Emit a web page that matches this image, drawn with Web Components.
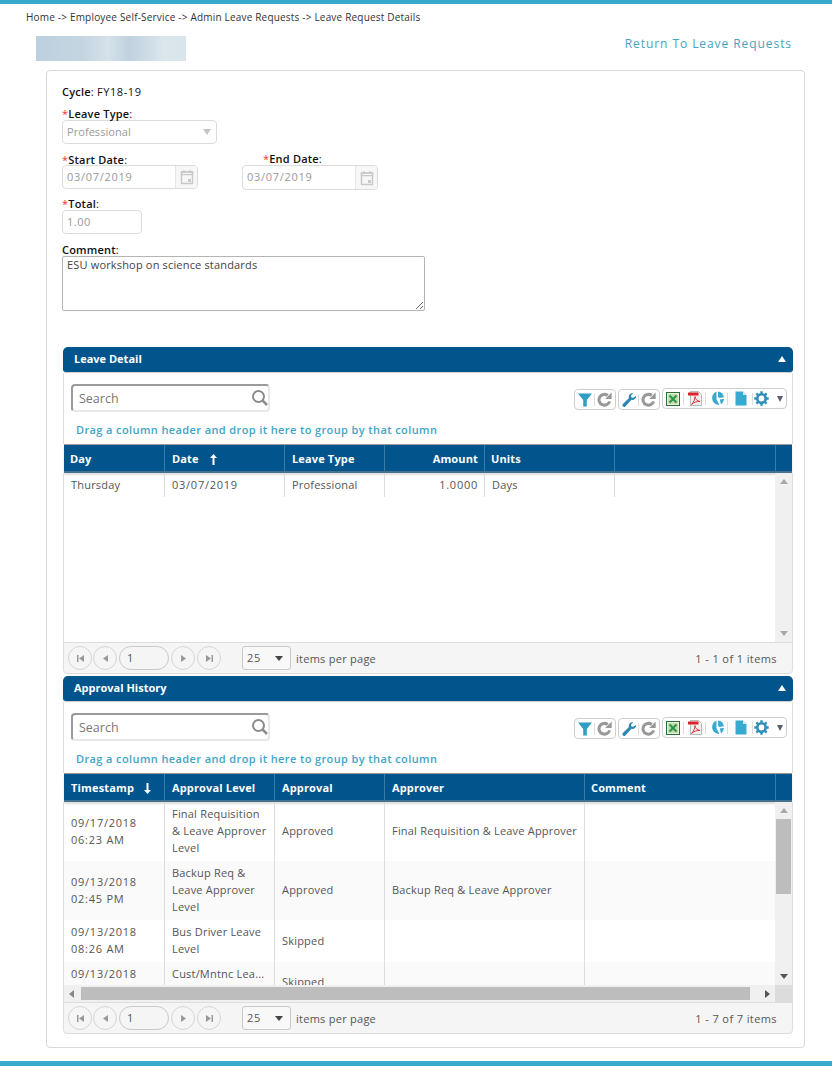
<!DOCTYPE html>
<html>
<head>
<meta charset="utf-8">
<title>Leave Request Details</title>
<style>
  html, body { margin: 0; padding: 0; background: #fff; }
  body { font-family: "Open Sans", "Liberation Sans", sans-serif; }
</style>
</head>
<body>
<leave-page>
  <span slot="crumbs">Home -&gt; Employee Self-Service -&gt; Admin Leave Requests -&gt; Leave Request Details</span>
  <span slot="back">Return To Leave Requests</span>
  <leave-form></leave-form>
  <grid-panel>
    <span slot="title">Leave Detail</span>
    <data-grid id="detailGrid" body-height="169"></data-grid>
    <grid-pager range="1 - 1 of 1 items" height="32"></grid-pager>
  </grid-panel>
  <grid-panel class="second">
    <span slot="title">Approval History</span>
    <data-grid id="historyGrid" body-height="183" hscroll></data-grid>
    <grid-pager range="1 - 7 of 7 items" height="32"></grid-pager>
  </grid-panel>
</leave-page>

<script>
class LeavePage extends HTMLElement {
  constructor() {
    super();
    this.attachShadow({ mode: "open" });
    this.shadowRoot.innerHTML = `
      <style>
        :host { display: block; height: 1066px; box-sizing: border-box; border-top: 4px solid #38abcd; border-bottom: 5px solid #38abcd; overflow: hidden; font-size: 11px; color: #333; }
        .crumbs { padding: 7px 0 0 26px; height: 24px; box-sizing: border-box; font-size: 10px; letter-spacing: 0.19px; line-height: 12px; color: #333; }
        .head { display: flex; justify-content: space-between; height: 42px; padding: 8px 40px 0 36px; box-sizing: border-box; }
        .blur { width: 150px; height: 25px; background: linear-gradient(90deg, #bdd0de 0%, #c3d5e1 30%, #d6e1e9 48%, #bfd2df 62%, #dbe5ec 85%, #d9e4eb 100%); }
        .back { font-size: 12px; letter-spacing: 0.93px; line-height: 16px; color: #46a3bf; }
        .card { box-sizing: border-box; width: 759px; height: 978px; margin-left: 46px; padding: 0 11px 0 15px; border: 1px solid #d9d9d9; border-radius: 4px; display: flex; flex-direction: column; }
      </style>
      <div class="crumbs"><slot name="crumbs"></slot></div>
      <div class="head">
        <div class="blur"></div>
        <div class="back"><slot name="back"></slot></div>
      </div>
      <div class="card"><slot></slot></div>
    `;
  }
}

class LeaveForm extends HTMLElement {
  constructor() {
    super();
    this.attachShadow({ mode: "open" });
    const cal = `<span class="cal"><svg width="14" height="16" viewBox="0 0 14 16"><path d="M1.5 3h11v11.5h-11z" fill="none" stroke="#c9c9c9" stroke-width="1.4"/><path d="M1.5 3h11v2.6h-11zM4 1v3M10 1v3" fill="none" stroke="#c9c9c9" stroke-width="1.4"/><rect x="8" y="10" width="3" height="3" fill="#c9c9c9"/></svg></span>`;
    this.shadowRoot.innerHTML = `
      <style>
        :host { display: block; height: 276px; padding-top: 14px; box-sizing: border-box; font-size: 11px; letter-spacing: 0.2px; }
        label, .cycle { display: block; color: #111; line-height: 13px; }
        label b, .cycle b { font-weight: 600; }
        .cycle span { letter-spacing: 0.6px; }
        i { font-style: normal; color: #e33; }
        .box { box-sizing: border-box; border: 1px solid #dcdcdc; border-radius: 4px; height: 24px; line-height: 22px; color: #999; padding-left: 4px; background: #fff; display: flex; justify-content: space-between; }
        .type { width: 155px; padding-right: 5px; letter-spacing: 0.05px; }
        .type::after { content: ""; align-self: center; border: 4.500px solid transparent; border-top: 6px solid #c4c4c4; border-bottom: 0; }
        .dates { display: flex; gap: 44px; margin-top: 9px; }
        .date { width: 136px; padding-right: 0; letter-spacing: 0.7px; }
        .start label { margin-bottom: -1px; }
        .end label { padding-left: 21px; margin-top: -1px; }
        .end .date { height: 25px; margin-bottom: -1px; }
        .cal { width: 21px; border-left: 1px solid #e6e6e6; background: #f7f7f7; border-radius: 0 3px 3px 0; display: flex; align-items: center; justify-content: center; }
        .total { width: 80px; letter-spacing: 0.5px; }
        .gap { margin-top: 8px; }
        .gap.comment-label { margin-top: 9px; }
        .comment { box-sizing: border-box; width: 363px; height: 55px; border: 1px solid #b4b4b4; border-radius: 2px; padding: 1px 4px; line-height: 14px; color: #444; position: relative; letter-spacing: 0.17px; }
        .comment svg { position: absolute; right: 0; bottom: 0; }
      </style>
      <div class="cycle"><b>Cycle</b>: <span>FY18-19</span></div>
      <label style="margin-top:9px"><i>*</i><b>Leave Type</b>:</label>
      <div class="box type">Professional</div>
      <div class="dates">
        <div class="start">
          <label><i>*</i><b>Start Date</b>:</label>
          <div class="box date">03/07/2019 ${cal}</div>
        </div>
        <div class="end">
          <label><i>*</i><b>End Date</b>:</label>
          <div class="box date">03/07/2019 ${cal}</div>
        </div>
      </div>
      <label class="gap"><i>*</i><b>Total</b>:</label>
      <div class="box total">1.00</div>
      <label class="gap comment-label"><b>Comment</b>:</label>
      <div class="comment">ESU workshop on science standards
        <svg width="10" height="10" viewBox="0 0 10 10"><path d="M9 2L2 9M9 6L6 9" stroke="#666" fill="none"/></svg>
      </div>
    `;
  }
}

class GridPanel extends HTMLElement {
  constructor() {
    super();
    this.attachShadow({ mode: "open" });
    this.shadowRoot.innerHTML = `
      <style>
        :host { display: block; box-sizing: border-box; width: 730px; margin-left: 1px; }
        :host(.second) { margin-top: 2px; }
        .bar { box-sizing: border-box; height: 25px; background: #01558c; border-radius: 5px 5px 3px 3px; color: #fff; font-weight: 700; font-size: 11px; line-height: 23px; padding: 0 11px 2px; display: flex; justify-content: space-between; align-items: center; box-shadow: 0 1px 1px #ccc; }
        .bar::after { content: ""; border: 4px solid transparent; border-bottom: 6px solid #fff; border-top: 0; margin-right: -4px; }
        .body { margin-top: 1px; }
      </style>
      <div class="bar"><slot name="title"></slot></div>
      <div class="body"><slot></slot></div>
    `;
  }
}

class GridToolbar extends HTMLElement {
  constructor() {
    super();
    this.attachShadow({ mode: "open" });
    const refresh = `<svg width="15" height="15" viewBox="0 0 15 15"><path d="M12.600 9.300A5.400 5.400 0 1 1 10.700 3.500" fill="none" stroke="#989898" stroke-width="3"/><path d="M8.200 7h6.500V.6z" fill="#989898"/></svg>`;
    const sep = `<span class="sep"></span>`;
    this.shadowRoot.innerHTML = `
      <style>
        :host { display: flex; justify-content: space-between; align-items: flex-start; box-sizing: border-box; height: 71px; padding: 11px 5px 0 7px; border-left: 1px solid #ddd; border-right: 1px solid #ddd; }
        .col { display: flex; flex-direction: column; }
        .search { box-sizing: border-box; width: 199px; height: 28px; border: 2px solid #9b9b9b; border-right-color: #e8e8e8; border-bottom-color: #e8e8e8; border-radius: 4px; display: flex; align-items: center; justify-content: space-between; padding: 0 0 0 6px; font-size: 12.5px; color: #777; }
        .search svg { margin-right: -2px; }
        .drag { margin: 11px 0 0 5px; font-size: 11px; font-weight: 600; letter-spacing: 0.39px; line-height: 14px; color: #3fa5c6; white-space: nowrap; }
        .tools { display: flex; gap: 2px; margin-top: 5px; }
        .grp { box-sizing: border-box; height: 21px; border: 1px solid #cfcfcf; border-radius: 4px; display: flex; align-items: center; padding: 0 3px; background: #fff; }
        .grp.up { margin-top: -1px; width: 125px; }
        .sep { width: 1px; height: 12px; background: #ddd; margin: 0 2px; flex: none; }
        .grp.up .sep { margin: 0 4px 0 3px; }
        .grp.up .doc { margin-left: 3px; margin-right: 2px; }
        .grp.up .sep.tight { margin: 0 1px 0 3px; }
        .caret { border: 3.500px solid transparent; border-top: 6px solid #5a5f73; border-bottom: 0; margin: 0 0 0 8px; }
        svg { flex: none; display: block; }
      </style>
      <div class="col">
        <div class="search">Search
          <svg width="20" height="20" viewBox="0 0 20 20"><circle cx="8.5" cy="8.5" r="5.5" fill="none" stroke="#8b8b8b" stroke-width="2"/><path d="M12.7 12.7L17 17" stroke="#8b8b8b" stroke-width="2.6"/></svg>
        </div>
        <div class="drag">Drag a column header and drop it here to group by that column</div>
      </div>
      <div class="tools">
        <div class="grp" style="width:42px">
          <svg width="14" height="14" viewBox="0 0 14 14"><path d="M0 .5h14L8.800 7v6.500H5.200V7z" fill="#2f9ec4"/></svg>${sep}${refresh}
        </div>
        <div class="grp" style="width:42px">
          <svg width="14" height="14" viewBox="0 0 14 14"><path d="M14 2.900a3.500 3.500 0 0 1-4.500 3.900L3.600 13.300a1.700 1.700 0 0 1-2.700-2.200l6.100-6A3.600 3.600 0 0 1 11.200.4L9 2.600l.4 1.800 1.800.3z" fill="#2f86b0"/></svg>${sep}${refresh}
        </div>
        <div class="grp up">
          <svg width="14" height="14" viewBox="0 0 14 14"><rect x=".5" y=".5" width="13" height="13" fill="#e9f1df" stroke="#2f6b36"/><path d="M2 2h10v10H2z" fill="#c6dcb0"/><path d="M3.500 3.500l7 7M10.500 3.500l-7 7" stroke="#2a9a48" stroke-width="2.200"/></svg>${sep}
          <svg width="14" height="15" viewBox="0 0 14 15"><path d="M2.500 .5h8l3 3v11h-11z" fill="#efefef" stroke="#aaa" stroke-width=".8"/><rect x="0" y="1.500" width="10.500" height="3" fill="#d8232a"/><path d="M3.500 13.500c2.500-2.500 3.500-5.500 3.500-8 0 2.500 2 4.300 5 5-3.500-.3-6.500 1-8.500 3z" fill="none" stroke="#d8232a" stroke-width=".9"/></svg>${sep}
          <svg width="14" height="15" viewBox="0 0 14 15"><path d="M6.500 .5v7.800L9.400 14A7 7 0 0 1 6.500 .5z" fill="#38a9cf"/><path d="M8 .5A7 7 0 0 1 13.900 6.200L9.200 7 8 5.500z" fill="#38a9cf"/><path d="M9.800 8.500L14 7.800A7 7 0 0 1 11 13.500z" fill="#38a9cf"/></svg><span class="sep"></span>
          <svg class="doc" width="12" height="15" viewBox="0 0 12 15"><path d="M.5 .5h7.500l3.500 3.500v10.500h-11z" fill="#38a9cf"/><path d="M8 .5v3.500h3.500z" fill="#cde9f3"/></svg><span class="sep tight"></span>
          <svg width="15" height="15" viewBox="0 0 15 15"><circle cx="7.500" cy="7.500" r="4.200" fill="none" stroke="#2f8fb8" stroke-width="2.600"/><path d="M7.500 .3v14.400M.3 7.500h14.400M2.400 2.400l10.200 10.200M12.600 2.400L2.400 12.600" stroke="#2f8fb8" stroke-width="2.400" stroke-dasharray="2.600 9.200 2.600"/></svg>
          <span class="caret"></span>
        </div>
      </div>
    `;
  }
}

class DataGrid extends HTMLElement {
  constructor() {
    super();
    this.attachShadow({ mode: "open" });
    const tpl = document.createElement("template");
    tpl.innerHTML = `
      <style>
        :host { display: block; box-sizing: border-box; }
        .head { display: flex; height: 29px; background: #01558c; border-top: 1px solid #999; border-bottom: 2px solid #46718f; box-sizing: border-box; margin: 0 1px; box-shadow: 0 2px 2px #ddd; position: relative; }
        .head div { box-sizing: border-box; flex: none; color: #fff; font-weight: 700; font-size: 11px; line-height: 28px; padding: 0 6px; border-left: 1px solid #3a7aa3; white-space: pre; letter-spacing: 0.15px; }
        .head div:first-child { border-left: 0; }
        .head .end { border-left: 1px solid #3a7aa3; width: 17px; padding: 0; }
        .body { display: flex; border-left: 1px solid #ddd; border-right: 1px solid #ddd; box-sizing: border-box; overflow: hidden; }
        .rows { flex: 1; overflow: hidden; min-width: 0; }
        .row { display: flex; }
        .row:nth-child(even) { background: #fafafa; }
        .row div { box-sizing: border-box; flex: none; padding: 0 6px 2px 7px; color: #555; font-size: 11px; letter-spacing: 0.2px; line-height: 17px; border-left: 1px solid #ddd; display: flex; align-items: center; white-space: nowrap; }
        .row div:first-child { border-left: 0; }
        .row .n { letter-spacing: 0.75px; }
        .vbar { width: 17px; background: #f0f0f0; flex: none; position: relative; display: flex; flex-direction: column; align-items: center; justify-content: space-between; padding: 6px 0; box-sizing: border-box; }
        .up { border: 4px solid transparent; border-bottom: 5px solid #a9a9a9; border-top: 0; }
        .down { border: 4px solid transparent; border-top: 5px solid #a9a9a9; border-bottom: 0; }
        :host([hscroll]) .down { border-top-color: #555; }
        .thumb { position: absolute; left: 1px; right: 1px; top: 17px; height: 75px; background: #bdbdbd; }
        .hbar { display: flex; align-items: center; height: 17px; background: #f0f0f0; border-left: 1px solid #ddd; border-right: 1px solid #ddd; }
        .hbar .l { border: 4px solid transparent; border-right: 5px solid #888; border-left: 0; margin: 0 5px 0 5px; }
        .hbar .t { height: 13px; width: 669px; background: #bdbdbd; margin-left: 2px; }
        .hbar .r { border: 4px solid transparent; border-left: 5px solid #555; border-right: 0; margin-left: 15px; }
        .hbar .c { margin-left: auto; width: 17px; height: 17px; background: #dcdcdc; }
      </style>
      <grid-toolbar></grid-toolbar>
      <div class="head"></div>
      <div class="body"><div class="rows"></div><div class="vbar"><span class="up"></span><span class="down"></span></div></div>
    `;
    this.shadowRoot.appendChild(tpl.content.cloneNode(true));
    this._data = null;
  }

  set data(value) {
    this._data = value;
    this.buildGrid();
  }

  buildGrid() {
    const { columns, rows, thumb } = this._data;
    const root = this.shadowRoot;
    const cell = (tag, col, text) => `<div style="width:${col.width}px;${col.right ? "justify-content:flex-end;text-align:right;" : ""}${tag === "th" && col.pad ? "padding-left:" + col.pad + "px;" : ""}">${text}</div>`;
    root.querySelector(".head").innerHTML =
      columns.map((c) => cell("th", c, c.title)).join("") + `<div class="end"></div>`;
    root.querySelector(".rows").innerHTML = rows
      .map((r) => `<div class="row" style="height:${r.height}px">${columns.map((c, i) => cell("td", c, r.cells[i])).join("")}</div>`)
      .join("");
    const body = root.querySelector(".body");
    body.style.height = this.getAttribute("body-height") + "px";
    if (this.hasAttribute("hscroll")) {
      body.insertAdjacentHTML("afterend", `<div class="hbar"><span class="l"></span><span class="t"></span><span class="r"></span><span class="c"></span></div>`);
    }
    if (thumb) root.querySelector(".vbar").insertAdjacentHTML("beforeend", `<span class="thumb"></span>`);
  }
}

class GridPager extends HTMLElement {
  constructor() {
    super();
    this.attachShadow({ mode: "open" });
    const btn = (shape, cls = "") => `<span class="btn ${cls}">${shape}</span>`;
    const first = `<svg width="9" height="9" viewBox="0 0 9 9"><path d="M1 1h1.500v7H1zM8 1v7L3 4.500z" fill="#999"/></svg>`;
    const prev = `<svg width="7" height="9" viewBox="0 0 7 9"><path d="M6 1v7L1 4.500z" fill="#999"/></svg>`;
    const next = `<svg width="7" height="9" viewBox="0 0 7 9"><path d="M1 1v7l5-3.500z" fill="#999"/></svg>`;
    const last = `<svg width="9" height="9" viewBox="0 0 9 9"><path d="M1 1v7l5-3.500zM6.500 1H8v7H6.500z" fill="#999"/></svg>`;
    this.shadowRoot.innerHTML = `
      <style>
        :host { display: flex; align-items: center; box-sizing: border-box; height: ${this.getAttribute("height")}px; padding: 0 15px 0 4px; background: #f5f5f5; border: 1px solid #ddd; border-radius: 0 0 4px 4px; font-size: 11px; letter-spacing: 0.26px; color: #555; }
        .btn { box-sizing: border-box; width: 24px; height: 24px; margin-right: 2px; border: 1px solid #d6d6d6; border-radius: 50%; display: flex; align-items: center; justify-content: center; }
        .btn.tight { margin-right: 1px; }
        .num { box-sizing: border-box; width: 50px; height: 24px; margin-right: 2px; border: 1px solid #c9c9c9; border-radius: 12px; line-height: 22px; padding-left: 7px; }
        .size { box-sizing: border-box; width: 49px; height: 24px; margin: 0 5px 0 19px; border: 1px solid #c9c9c9; border-radius: 3px; line-height: 22px; padding: 0 7px 0 4px; display: flex; justify-content: space-between; align-items: center; background: #f8f8f8; letter-spacing: 0.7px; }
        .size::after { content: ""; border: 4px solid transparent; border-top: 5px solid #444; border-bottom: 0; }
        .range { margin-left: auto; letter-spacing: 0.4px; }
      </style>
      ${btn(first, "tight")}${btn(prev)}<span class="num">1</span>${btn(next)}${btn(last)}
      <span class="size">25</span><span>items per page</span>
      <span class="range">${this.getAttribute("range")}</span>
    `;
  }
}

customElements.define("leave-page", LeavePage);
customElements.define("leave-form", LeaveForm);
customElements.define("grid-panel", GridPanel);
customElements.define("grid-toolbar", GridToolbar);
customElements.define("data-grid", DataGrid);
customElements.define("grid-pager", GridPager);

const upArrow = `<svg width="7" height="11" viewBox="0 0 7 11" style="vertical-align:-2px;margin-left:11px"><path d="M3.500 0L7 4H4.500v7h-2V4H0z" fill="#fff"/></svg>`;
const downArrow = `<svg width="7" height="11" viewBox="0 0 7 11" style="vertical-align:-2px;margin-left:10px"><path d="M3.500 11L7 7H4.500V0h-2v7H0z" fill="#fff"/></svg>`;
const num = (text) => `<span class="n">${text}</span>`;

document.getElementById("detailGrid").data = {
  columns: [
    { title: "Day", width: 100 },
    { title: "Date" + upArrow, width: 120, pad: 7 },
    { title: "Leave Type", width: 100, pad: 7 },
    { title: "Amount", width: 100, right: true },
    { title: "Units", width: 130 },
    { title: "", width: 161 }
  ],
  rows: [{ height: 24, cells: ["Thursday", num("03/07/2019"), "Professional", num("1.0000"), "Days", ""] }]
};

document.getElementById("historyGrid").data = {
  thumb: true,
  columns: [
    { title: "Timestamp" + downArrow, width: 100, pad: 7 },
    { title: "Approval Level", width: 110, pad: 7 },
    { title: "Approval", width: 110, pad: 7 },
    { title: "Approver", width: 200, pad: 7 },
    { title: "Comment", width: 191 }
  ],
  rows: [
    { height: 59, cells: [num("09/17/2018<br>06:23 AM"), "Final Requisition<br>&amp; Leave Approver<br>Level", "Approved", "Final Requisition &amp; Leave Approver", ""] },
    { height: 59, cells: [num("09/13/2018<br>02:45 PM"), "Backup Req &amp;<br>Leave Approver<br>Level", "Approved", "Backup Req &amp; Leave Approver", ""] },
    { height: 42, cells: [num("09/13/2018<br>08:26 AM"), "Bus Driver Leave<br>Level", "Skipped", "", ""] },
    { height: 41, cells: [num("09/13/2018<br>08:26 AM"), "Cust/Mntnc Lea...<br>Level", "Skipped", "", ""] }
  ]
};
</script>
</body>
</html>
